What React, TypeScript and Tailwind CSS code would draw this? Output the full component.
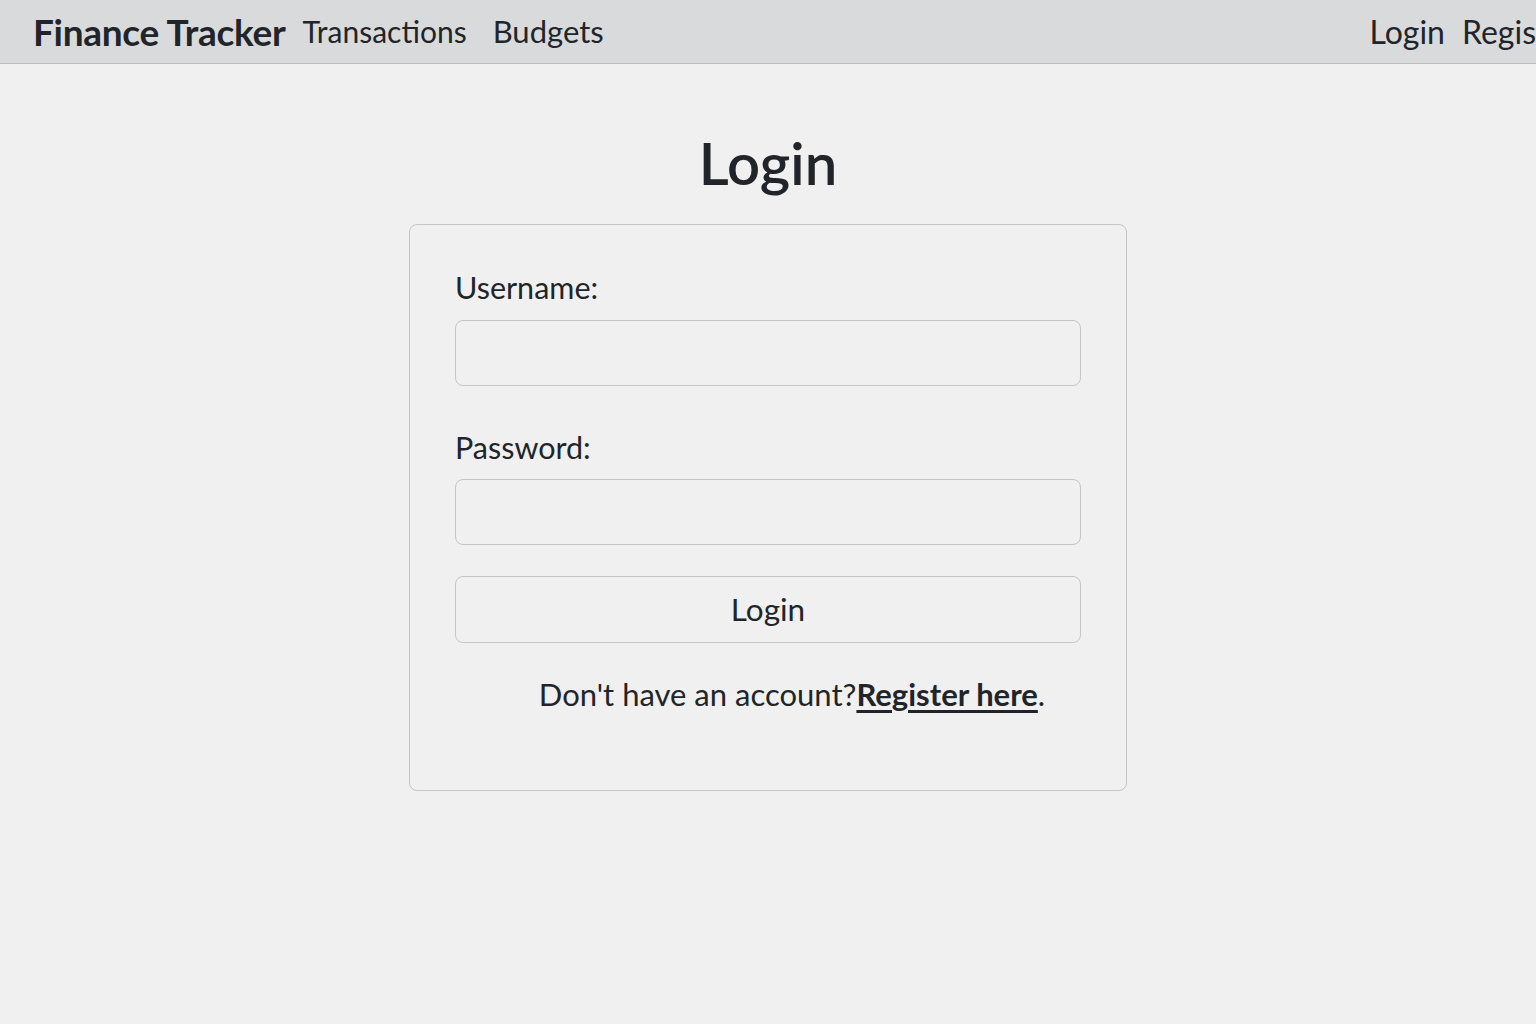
import React from 'react';

export default function App() {
  return (
    <div className="min-h-screen bg-[#f0f0f0] text-[#212529] font-['Lato','Noto_Sans',sans-serif]">
      <nav className="h-[64px] bg-[#d9dadb] border-b border-[#bdbebf] flex items-center pl-[33px] overflow-hidden">
        <span className="text-[37px] font-bold tracking-[-0.3px] mr-[17px] whitespace-nowrap">Finance Tracker</span>
        <a className="text-[30px] mr-[26px] whitespace-nowrap">Transactions</a>
        <a className="text-[31px] whitespace-nowrap">Budgets</a>
        <div className="ml-auto flex gap-[17px] whitespace-nowrap -mr-[40px]">
          <a className="text-[32px]">Login</a>
          <a className="text-[32px]">Register</a>
        </div>
      </nav>

      <main className="flex flex-col items-center pt-[70px]">
        <h1 className="text-[58px] font-semibold leading-none mb-[32px]">Login</h1>
        <div className="w-[718px] h-[567px] border border-[#c4c5c6] rounded-[8px] px-[45px] pt-[43px]">
          <label className="block text-[30.5px] leading-[38px] mb-[14px]">Username:</label>
          <input type="text" className="block w-full h-[66px] border border-[#c4c5c6] rounded-[8px] bg-transparent outline-none" />
          <label className="block text-[30.5px] leading-[38px] mt-[42px] mb-[13px]">Password:</label>
          <input type="password" className="block w-full h-[66px] border border-[#c4c5c6] rounded-[8px] bg-transparent outline-none" />
          <button className="block w-full h-[67px] mt-[31px] border border-[#c4c5c6] rounded-[8px] text-[31.5px] bg-transparent">
            Login
          </button>
          <p className="text-center text-[31px] mt-[28px] pl-[48px]">
            Don't have an account?<a className="font-bold underline underline-offset-[4px]">Register here</a>.
          </p>
        </div>
      </main>
    </div>
  );
}
